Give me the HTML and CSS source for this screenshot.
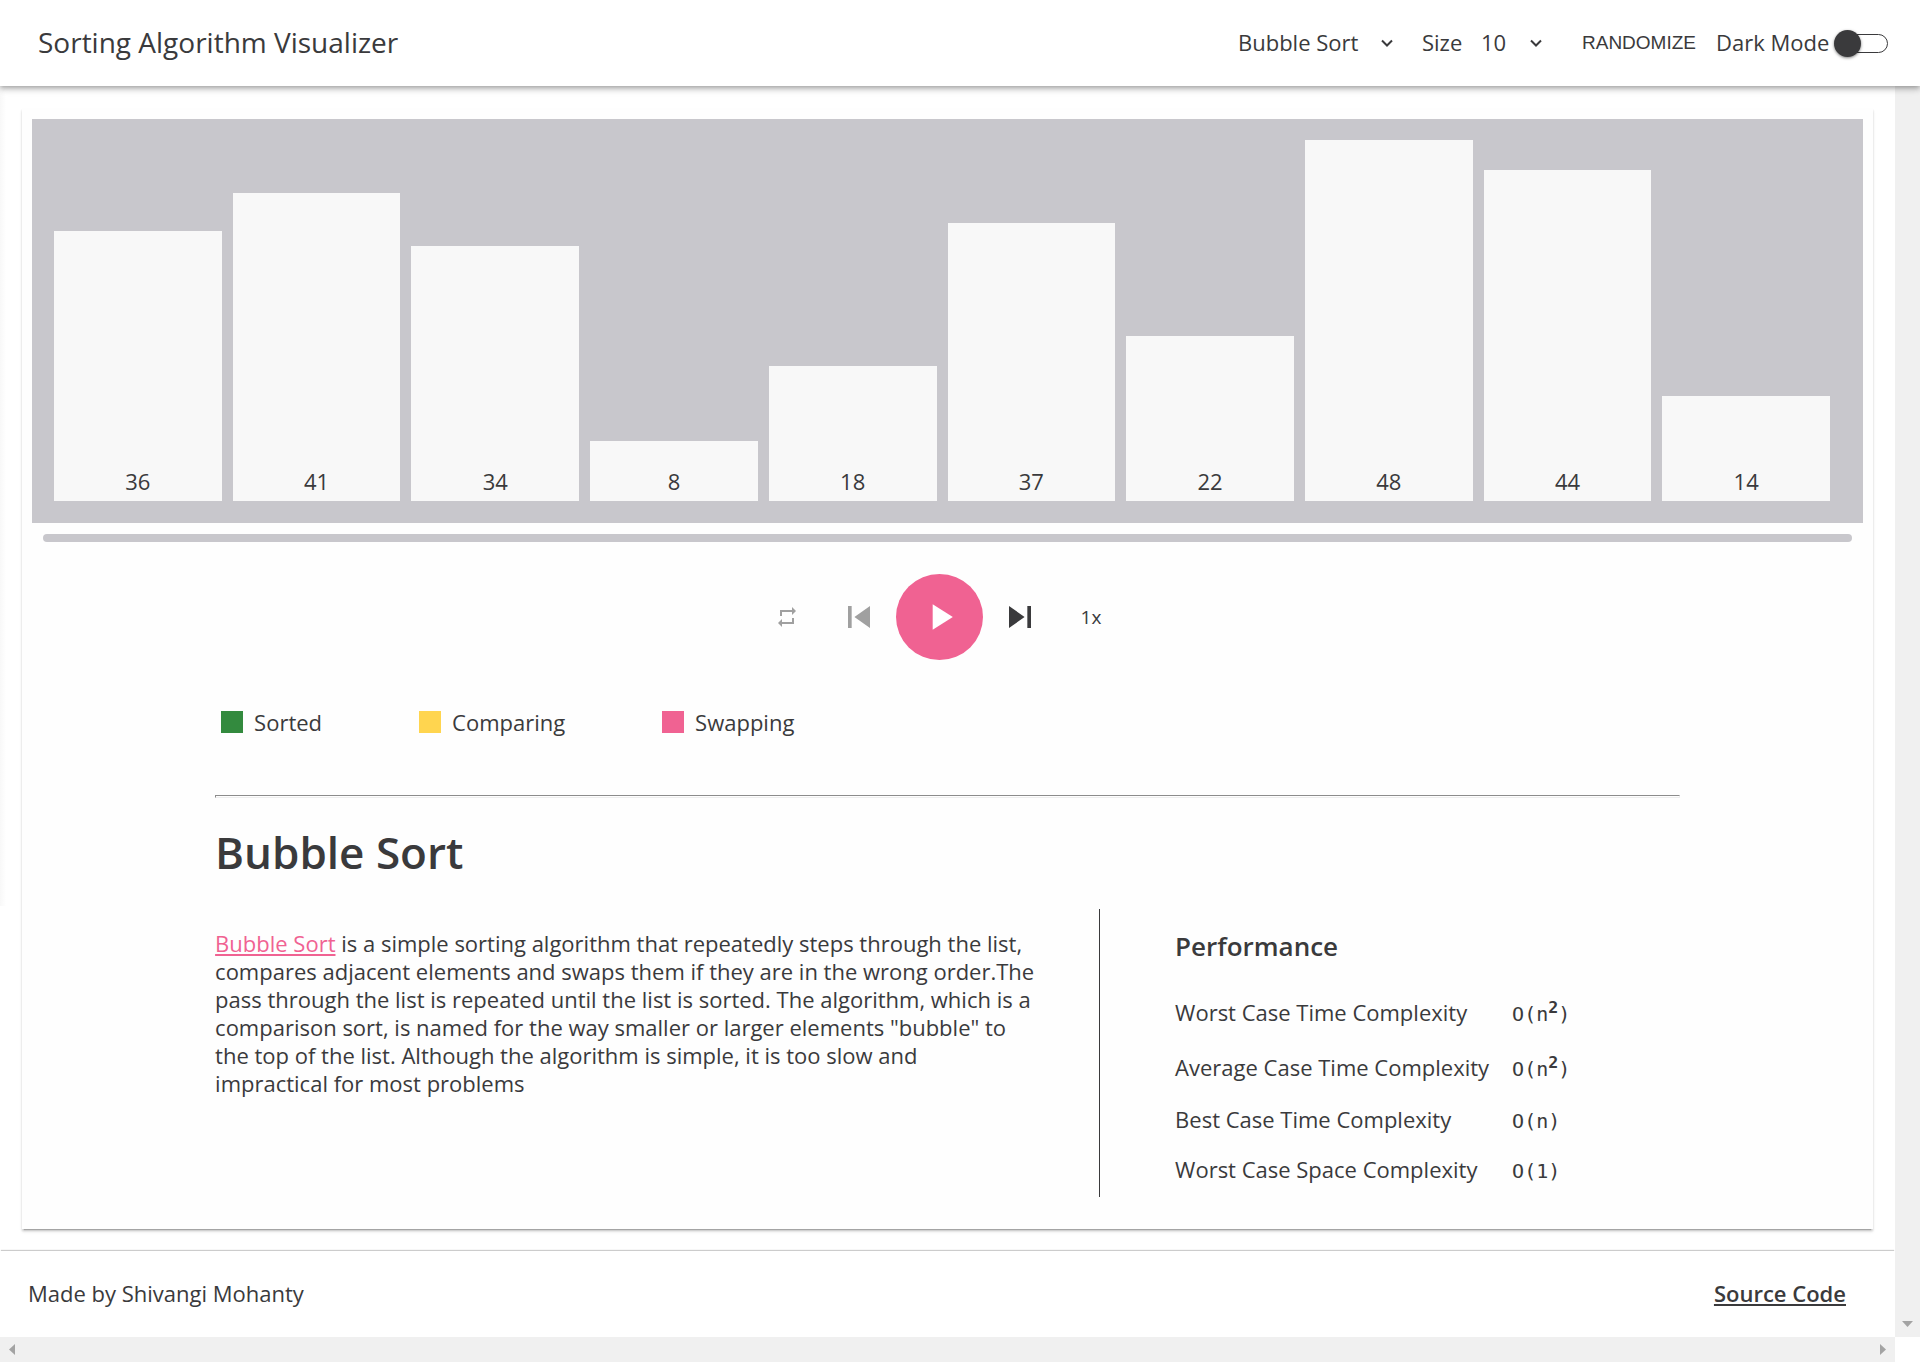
FILE: index.html
```html
<!DOCTYPE html>
<html lang="en">
<head>
<meta charset="utf-8">
<meta name="viewport" content="width=device-width, initial-scale=1">
<title>Sorting Algorithm Visualizer</title>
<link rel="stylesheet" href="styles.css">
</head>
<body>
<header class="topbar">
  <div class="brand">Sorting Algorithm Visualizer</div>
  <div class="tools">
    <div class="picker picker-algorithm">
      <select class="picker-select" aria-label="Algorithm"><option>Bubble Sort</option></select>
      <svg class="picker-arrow" viewBox="0 0 14 14" aria-hidden="true"><path d="M2 4.500l5 5 5-5" fill="none" stroke="currentColor" stroke-width="2"/></svg>
    </div>
    <label class="size-label" for="size">Size</label>
    <div class="picker picker-size">
      <select class="picker-select" id="size"><option>10</option></select>
      <svg class="picker-arrow" viewBox="0 0 14 14" aria-hidden="true"><path d="M2 4.500l5 5 5-5" fill="none" stroke="currentColor" stroke-width="2"/></svg>
    </div>
    <button class="randomize" type="button">RANDOMIZE</button>
    <label class="mode-label" for="dark">Dark Mode</label>
    <input class="toggle" id="dark" type="checkbox">
  </div>
</header>
<div class="viewport">
  <div class="content">
    <main class="card">
      <section class="chart" aria-label="Array">
        <div class="bar" style="height:74.79%">36</div>
        <div class="bar" style="height:85.32%">41</div>
        <div class="bar" style="height:70.64%">34</div>
        <div class="bar" style="height:16.62%">8</div>
        <div class="bar" style="height:37.4%">18</div>
        <div class="bar" style="height:77.01%">37</div>
        <div class="bar" style="height:45.71%">22</div>
        <div class="bar" style="height:100%">48</div>
        <div class="bar" style="height:91.69%">44</div>
        <div class="bar" style="height:29.09%">14</div>
      </section>
      <div class="progress"></div>
      <div class="controls">
        <button class="control" type="button" aria-label="Repeat" disabled><svg class="icon-small" viewBox="0 0 24 24"><path d="M7 7h10v3l4-4-4-4v3H5v6h2V7zm10 10H7v-3l-4 4 4 4v-3h12v-6h-2v4z"/></svg></button>
        <button class="control" type="button" aria-label="Previous step" disabled><svg class="icon" viewBox="0 0 24 24"><path d="M6 6h2v12H6zm3.500 6l8.500 6V6z"/></svg></button>
        <button class="play" type="button" aria-label="Play"><svg class="icon" viewBox="0 0 24 24"><path d="M8 5v14l11-7z"/></svg></button>
        <button class="control" type="button" aria-label="Next step"><svg class="icon" viewBox="0 0 24 24"><path d="M6 18l8.500-6L6 6v12zM16 6v12h2V6h-2z"/></svg></button>
        <button class="control speed" type="button">1x</button>
      </div>
      <div class="details">
        <ul class="legend">
          <li class="legend-item"><span class="swatch sorted"></span>Sorted</li>
          <li class="legend-item"><span class="swatch comparing"></span>Comparing</li>
          <li class="legend-item"><span class="swatch swapping"></span>Swapping</li>
        </ul>
        <hr class="rule">
        <h1 class="title">Bubble Sort</h1>
        <div class="columns">
          <p class="about"><a class="about-link" href="#bubble-sort">Bubble Sort</a> is a simple sorting algorithm that repeatedly steps through the list, compares adjacent elements and swaps them if they are in the wrong order.The pass through the list is repeated until the list is sorted. The algorithm, which is a comparison sort, is named for the way smaller or larger elements "bubble" to the top of the list. Although the algorithm is simple, it is too slow and<br>impractical for most problems</p>
          <section class="performance">
            <h2 class="subtitle">Performance</h2>
            <table class="complexity">
              <tr class="tall"><th scope="row">Worst Case Time Complexity</th><td>O(n<sup>2</sup>)</td></tr>
              <tr class="tall"><th scope="row">Average Case Time Complexity</th><td>O(n<sup>2</sup>)</td></tr>
              <tr><th scope="row">Best Case Time Complexity</th><td>O(n)</td></tr>
              <tr><th scope="row">Worst Case Space Complexity</th><td>O(1)</td></tr>
            </table>
          </section>
        </div>
      </div>
    </main>
    <footer class="footer">
      <span>Made by Shivangi Mohanty</span>
      <a class="source" href="#source">Source Code</a>
    </footer>
  </div>
  <div class="track track-vertical"><svg class="arrow" viewBox="0 0 11 6"><path d="M0 0h11l-5.500 6z"/></svg></div>
  <div class="track track-horizontal"><svg class="arrow-side" viewBox="0 0 6 11"><path d="M6 0v11L0 5.500z"/></svg><svg class="arrow-side" viewBox="0 0 6 11"><path d="M0 0v11l6-5.500z"/></svg></div>
</div>
</body>
</html>
```
FILE: styles.css
```css
* { box-sizing: border-box; }

body {
  margin: 0;
  min-height: 100vh;
  display: flex;
  flex-direction: column;
  background: #fff;
  color: #3a3a3c;
  font: 22px/28px "Open Sans", sans-serif;
}

button, select { font: inherit; color: inherit; background: none; border: 0; padding: 0; margin: 0; }
svg { display: block; fill: currentColor; }

.topbar {
  position: relative;
  z-index: 1;
  display: flex;
  align-items: center;
  justify-content: space-between;
  height: 86px;
  padding: 0 32px 0 38px;
  background: #fff;
  box-shadow: 0 2px 4px -1px rgba(0,0,0,.2), 0 4px 5px rgba(0,0,0,.14), 0 1px 10px rgba(0,0,0,.12);
}
.brand { padding-bottom: 2px; font-size: 28px; line-height: 36px; }
.tools { display: flex; align-items: center; }
.picker { display: grid; align-items: center; }
.picker > * { grid-area: 1 / 1; }
.picker-algorithm { width: 156px; margin-right: 28px; }
.picker-size { width: 62px; margin: 0 39px 0 16px; }
.picker-select { appearance: none; width: 100%; padding-bottom: 2px; }
.picker-arrow { width: 14px; height: 14px; justify-self: end; pointer-events: none; }
.size-label { width: 43px; padding-bottom: 2px; }
.randomize { width: 114px; margin-right: 20px; font: 19px/28px "Liberation Sans", sans-serif; }
.mode-label { width: 114px; margin-right: 4px; padding-bottom: 2px; white-space: nowrap; }
.toggle {
  appearance: none;
  display: flex;
  align-items: center;
  width: 48px;
  height: 19px;
  margin: 0 0 0 6px;
  border: 1px solid #3a3a3c;
  border-radius: 10px;
}
.toggle::before {
  content: "";
  flex: none;
  width: 27px;
  height: 27px;
  margin-left: -7px;
  border-radius: 50%;
  background: #3a3a3c;
  box-shadow: 0 1px 3px rgba(0,0,0,.5);
}

.viewport { flex: 1; display: grid; grid-template: 1fr 25px / minmax(0, 1fr) 25px; }
.content {
  display: flex;
  flex-direction: column;
  background: linear-gradient(to right, #f8f8f8, #fff) 0 0 / 6px 820px no-repeat;
}
.card {
  flex: 1;
  margin: 22px;
  padding: 11px 10px 32px;
  background: #fefefe;
  box-shadow: 0 3px 1px -2px rgba(0,0,0,.2), 0 2px 2px rgba(0,0,0,.14), 0 3px 3px rgba(0,0,0,.08);
}

.chart {
  display: flex;
  align-items: flex-end;
  gap: 11px;
  height: 404px;
  padding: 21px 33px 22px 22px;
  background: #c8c7cc;
}
.bar {
  flex: 1;
  display: flex;
  align-items: flex-end;
  justify-content: center;
  padding-bottom: 6px;
  background: #f8f8f8;
}
.progress { height: 8px; margin: 11px; border-radius: 4px; background: #c8c7cc; }

.controls {
  display: flex;
  align-items: center;
  justify-content: center;
  margin-top: 32px;
  padding-right: 18px;
}
.control { display: grid; place-items: center; width: 72px; height: 72px; }
.control:disabled { color: #a0a0a0; }
.icon { width: 44px; height: 44px; }
.icon-small { width: 24px; height: 24px; }
.play {
  display: grid;
  place-items: center;
  width: 87px;
  height: 86px;
  margin: 0 1px;
  border-radius: 50%;
  background: #f06292;
  color: #fff;
}
.speed { width: 70px; font-size: 19px; line-height: 26px; }

.details { width: 80%; margin: 0 auto; }
.legend {
  display: grid;
  grid-template-columns: 198px 243px auto;
  margin: 48px 0 0;
  padding: 0 0 0 6px;
  list-style: none;
}
.legend-item { display: flex; align-items: center; gap: 11px; }
.swatch { width: 22px; height: 22px; }
.sorted { background: #338a3e; }
.comparing { background: #ffd54f; }
.swapping { background: #f06292; }
.rule {
  height: 3px;
  margin: 59px 0 0;
  border: 1px solid;
  border-color: #8c8c8c #eee #eee #8c8c8c;
}
.title { margin: 26px 0 0; font-size: 44px; font-weight: 600; line-height: 56px; }
.columns { display: flex; margin-top: 29px; }
.about { flex: 0 0 825px; margin: 20px 59px 0 0; }
.about-link { color: #f06292; }
.performance { padding: 21px 0 0 75px; border-left: 1px solid #3a3a3c; }
.subtitle { margin: 0 0 22px; font-size: 26px; font-weight: 600; line-height: 32px; }
.complexity { border-collapse: collapse; margin-bottom: 3px; }
.complexity tr { height: 50px; }
.complexity .tall { height: 55px; }
.complexity th { width: 337px; padding: 0; font-weight: 400; text-align: left; }
.complexity td { padding: 4px 0 0; font-family: "DejaVu Sans Mono", monospace; font-size: 20px; }
.complexity sup { line-height: 0; font-weight: 700; }

.footer {
  display: flex;
  align-items: center;
  justify-content: space-between;
  height: 86px;
  padding: 0 49px 2px 28px;
  background: #fff;
  box-shadow: 0 -2px 1px -1px rgba(0,0,0,.2);
}
.source { color: inherit; font-weight: 600; }

.track { background: #f0f0f0; color: #a3a3a3; display: flex; }
.track-vertical { align-items: flex-end; justify-content: center; padding-bottom: 10px; }
.track-horizontal { align-items: center; justify-content: space-between; padding: 0 9px; }
.arrow { width: 11px; height: 6px; }
.arrow-side { width: 6px; height: 11px; }
```
